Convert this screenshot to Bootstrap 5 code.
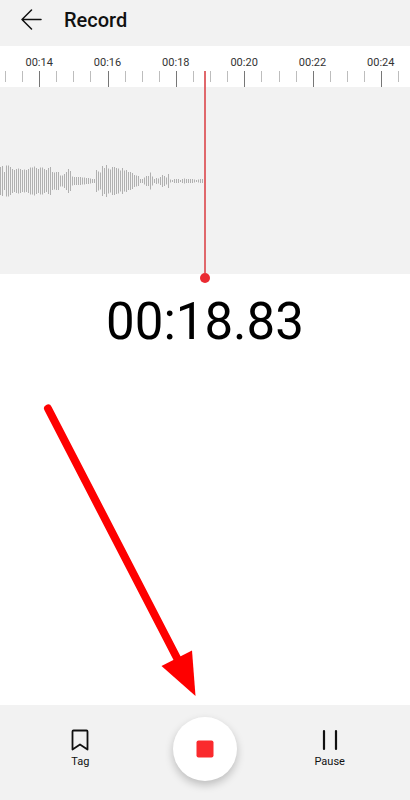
<!DOCTYPE html>
<html lang="en">
<head>
<meta charset="utf-8">
<meta name="viewport" content="width=device-width, initial-scale=1">
<title>Record</title>
<link href="https://cdn.jsdelivr.net/npm/bootstrap@5.3.0/dist/css/bootstrap.min.css" rel="stylesheet">
<style>
  body { font-family: Roboto, "Liberation Sans", sans-serif; color: #111; }
  svg { display: block; }
  .panel { background: #f2f2f2; }
  .topbar { height: 46px; padding: 0 20px 6px; gap: 22px; }
  .topbar h1 { font-size: 20px; line-height: 24px; font-weight: 500; }
  .ruler { height: 41px; }
  .ruler-labels { margin: 0 -5px 0 5px; padding-top: 9px; font-size: 11px; line-height: 16px; color: #333; }
  .ticks { width: 100%; height: 16px; }
  .wave { height: 187px; }
  .wave svg { width: 50%; height: 40px; }
  .playhead { top: 25px; bottom: -9px; left: 50%; width: 10px; }
  .playhead-line { width: 2px; background: #e0686c; }
  .playhead-dot { width: 10px; height: 10px; background: #ea2a31; }
  .timer { font-size: 51px; line-height: 60px; padding-top: 18px; color: #000; }
  .controls { padding: 12px 18px 19px; }
  .control-btn { font-size: 11px; line-height: 16px; color: #111; }
  .control-btn svg { margin-bottom: 3px; }
  .stop-btn { width: 64px; height: 64px; box-shadow: 0 4px 9px rgba(0, 0, 0, .22); }
  .pointer-arrow { left: 40px; bottom: 99px; pointer-events: none; }
</style>
<script src="https://cdn.jsdelivr.net/npm/bootstrap@5.3.0/dist/js/bootstrap.bundle.min.js"></script>
</head>
<body class="bg-white">
<div class="d-flex flex-column min-vh-100 position-relative overflow-hidden">
  <header class="panel topbar d-flex align-items-center">
    <button type="button" class="btn p-0 border-0" aria-label="Back">
      <svg width="22" height="22" viewBox="0 0 22 22" fill="none" stroke="#111" stroke-width="1.500" stroke-linecap="round" stroke-linejoin="round"><path d="M21 10.500H2M11.500 1 2 10.500l9.500 9.500"/></svg>
    </button>
    <h1 class="mb-0">Record</h1>
  </header>

  <section class="position-relative" aria-label="Timeline">
    <div class="ruler overflow-hidden">
      <div class="ruler-labels row row-cols-6 g-0 text-center">
        <div class="col">00:14</div><div class="col">00:16</div><div class="col">00:18</div>
        <div class="col">00:20</div><div class="col">00:22</div><div class="col">00:24</div>
      </div>
      <svg class="ticks" viewBox="0 0 410 16" preserveAspectRatio="none" aria-hidden="true">
        <path id="minorTicks" stroke="#bdbdbd" fill="none"/>
        <path id="majorTicks" stroke="#777" fill="none"/>
      </svg>
    </div>
    <div class="wave panel d-flex align-items-center">
      <svg viewBox="0 0 205 40" preserveAspectRatio="none" aria-hidden="true"><path id="waveBars" stroke="#b0b0b0" fill="none"/></svg>
    </div>
    <div class="playhead position-absolute translate-middle-x d-flex flex-column align-items-center">
      <div class="playhead-line flex-grow-1"></div>
      <div class="playhead-dot rounded-circle"></div>
    </div>
  </section>

  <main class="flex-grow-1 text-center">
    <div class="timer" role="timer">00:18.83</div>
  </main>

  <footer class="panel controls">
    <div class="row g-0 align-items-center text-center">
      <div class="col">
        <button type="button" class="btn control-btn p-0 border-0 d-inline-flex flex-column align-items-center">
          <svg width="18" height="22" viewBox="0 0 18 22" fill="none" stroke="#111" stroke-width="1.800" stroke-linejoin="round"><path d="M2.500 1.500h13q1 0 1 1v18L9 15.500l-7.500 5v-18q0-1 1-1z"/></svg>
          Tag
        </button>
      </div>
      <div class="col d-flex justify-content-center">
        <button type="button" class="btn stop-btn bg-white rounded-circle border-0 p-0 d-flex align-items-center justify-content-center" aria-label="Stop">
          <svg width="18" height="18" viewBox="0 0 18 18"><rect x=".5" y=".5" width="17" height="17" rx="2" fill="#fa2a2d"/></svg>
        </button>
      </div>
      <div class="col">
        <button type="button" class="btn control-btn p-0 border-0 d-inline-flex flex-column align-items-center">
          <svg width="18" height="22" viewBox="0 0 18 22" stroke="#111" stroke-width="2.200" stroke-linecap="round"><path d="M3 2v18M15 2v18"/></svg>
          Pause
        </button>
      </div>
    </div>
  </footer>

  <svg class="pointer-arrow position-absolute" width="160" height="300" viewBox="0 0 160 300" aria-hidden="true">
    <path d="M8 7.500 138 259" stroke="#fe0000" stroke-width="8" stroke-linecap="round"/>
    <path d="M121.500 265 152 249.500 155.500 295z" fill="#fe0000"/>
  </svg>
</div>
<script>
  // Four ticks per two seconds; every fourth one carries a label.
  let minor = '', major = '';
  for (let i = -2; i <= 21; i++) {
    const x = Math.floor(39.6 + i * 17.1) + 0.5;
    if (i % 4 === 0) major += `M${x} 0v16`; else minor += `M${x} 0v11`;
  }
  document.getElementById('minorTicks').setAttribute('d', minor);
  document.getElementById('majorTicks').setAttribute('d', major);

  const levels = [28,30,18,31,31,28,24,22,24,25,24,22,23,22,24,27,27,29,26,24,27,27,24,22,26,28,18,17,18,18,11,11,14,18,24,20,
    9,8,8,8,8,7,7,6,6,5,4,4,22,19,17,30,26,32,25,23,28,28,26,25,21,26,21,22,18,18,16,12,11,10,4,4,7,10,10,17,9,4,6,5,8,12,
    10,7,14,3,2,4,4,4,2,4,5,4,4,4,4,3,2,3,4,4];
  document.getElementById('waveBars').setAttribute('d',
    levels.map((h, i) => `M${i * 2 + 0.5} ${20 - h / 2}v${h}`).join(''));
</script>
</body>
</html>
